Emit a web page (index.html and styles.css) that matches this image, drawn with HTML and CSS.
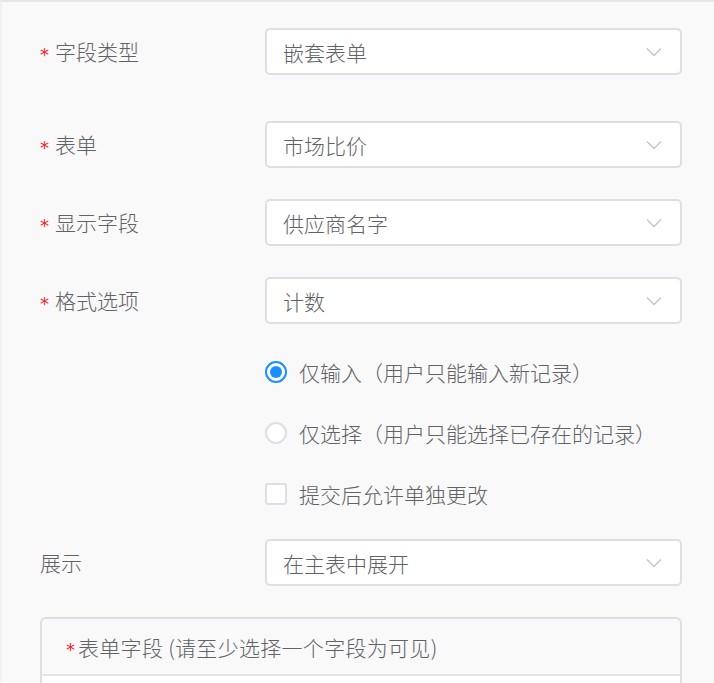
FILE: index.html
```html
<!DOCTYPE html>
<html lang="zh-CN">
<head>
<meta charset="utf-8">
<link rel="stylesheet" href="styles.css">
</head>
<body>
<div class="panel">
  <div class="row row-first">
    <div class="label"><span class="req">*</span>字段类型</div>
    <div class="select"><span>嵌套表单</span><svg class="chev" width="16" height="10" viewBox="0 0 16 10"><path d="M1 1.5 L8 8.5 L15 1.5" fill="none" stroke="#c0c4cc" stroke-width="1.3"/></svg></div>
  </div>
  <div class="row row-wide">
    <div class="label"><span class="req">*</span>表单</div>
    <div class="select"><span>市场比价</span><svg class="chev" width="16" height="10" viewBox="0 0 16 10"><path d="M1 1.5 L8 8.5 L15 1.5" fill="none" stroke="#c0c4cc" stroke-width="1.3"/></svg></div>
  </div>
  <div class="row">
    <div class="label"><span class="req">*</span>显示字段</div>
    <div class="select"><span>供应商名字</span><svg class="chev" width="16" height="10" viewBox="0 0 16 10"><path d="M1 1.5 L8 8.5 L15 1.5" fill="none" stroke="#c0c4cc" stroke-width="1.3"/></svg></div>
  </div>
  <div class="row">
    <div class="label"><span class="req">*</span>格式选项</div>
    <div class="select"><span>计数</span><svg class="chev" width="16" height="10" viewBox="0 0 16 10"><path d="M1 1.5 L8 8.5 L15 1.5" fill="none" stroke="#c0c4cc" stroke-width="1.3"/></svg></div>
  </div>
  <div class="options">
    <div class="option"><span class="radio checked"></span><span>仅输入（用户只能输入新记录）</span></div>
    <div class="option"><span class="radio"></span><span>仅选择（用户只能选择已存在的记录）</span></div>
    <div class="option"><span class="checkbox"></span><span>提交后允许单独更改</span></div>
  </div>
  <div class="row row-show">
    <div class="label">展示</div>
    <div class="select"><span>在主表中展开</span><svg class="chev" width="16" height="10" viewBox="0 0 16 10"><path d="M1 1.5 L8 8.5 L15 1.5" fill="none" stroke="#c0c4cc" stroke-width="1.3"/></svg></div>
  </div>
  <div class="box">
    <div class="box-head"><span class="req">*</span><span class="head-text">表单字段 (请至少选择一个字段为可见)</span></div>
    <div class="box-body"></div>
  </div>
</div>
</body>
</html>
```
FILE: styles.css
```css
html, body {
  margin: 0;
  padding: 0;
  background: #f9f9f9;
}
body {
  font-family: "Noto Sans CJK SC", "Noto Sans", sans-serif;
  font-size: 21px;
  font-weight: 300;
  color: #606266;
  height: 683px;
  overflow: hidden;
}
.panel {
  border-top: 2px solid #e6e6e6;
  border-left: 2px solid #f1f1f1;
  padding: 0 32px 0 38px;
  height: 681px;
  box-sizing: border-box;
}
.row {
  display: flex;
  align-items: center;
  margin-top: 31px;
  height: 47px;
}
.row-first { margin-top: 26px; }
.row-wide { margin-top: 46px; }
.row-show { margin-top: 15px; }
.label {
  width: 225px;
  display: flex;
  align-items: center;
  line-height: 1;
}
.req {
  color: #f5222d;
  margin-right: 6px;
  font-family: "DejaVu Sans", sans-serif;
  font-size: 18px;
  font-weight: 400;
  line-height: 1;
  position: relative;
  top: 3px;
}
.select {
  flex: 1;
  height: 47px;
  box-sizing: border-box;
  border: 2px solid #dcdfe6;
  border-radius: 5px;
  background: #fff;
  display: flex;
  align-items: center;
  justify-content: space-between;
  padding: 0 18px 0 16px;
}
.chev { display: block; }
.options {
  margin-left: 225px;
  margin-top: 17px;
}
.option {
  height: 61px;
  display: flex;
  align-items: center;
}
.radio, .checkbox {
  width: 22px;
  height: 22px;
  box-sizing: border-box;
  border: 2px solid #dcdfe6;
  background: #fff;
  margin-right: 12px;
  flex: none;
  position: relative;
}
.radio { border-radius: 50%; }
.checkbox { border-radius: 3px; }
.radio.checked { border-color: #1890ff; }
.radio.checked::after {
  content: "";
  position: absolute;
  left: 3px;
  top: 3px;
  width: 12px;
  height: 12px;
  border-radius: 50%;
  background: #1890ff;
}
.box {
  margin-top: 31px;
  border: 2px solid #dcdfe6;
  border-bottom: none;
  border-radius: 6px 6px 0 0;
}
.box-head {
  height: 55px;
  display: flex;
  align-items: center;
  padding-left: 24px;
  border-bottom: 2px solid #e4e4e4;
  background: #f9f9f9;
  border-radius: 6px 6px 0 0;
}
.box-head .req { margin-right: 3px; }
.head-text { letter-spacing: 0.3px; }
.box-body {
  height: 40px;
  background: #fff;
}
```
